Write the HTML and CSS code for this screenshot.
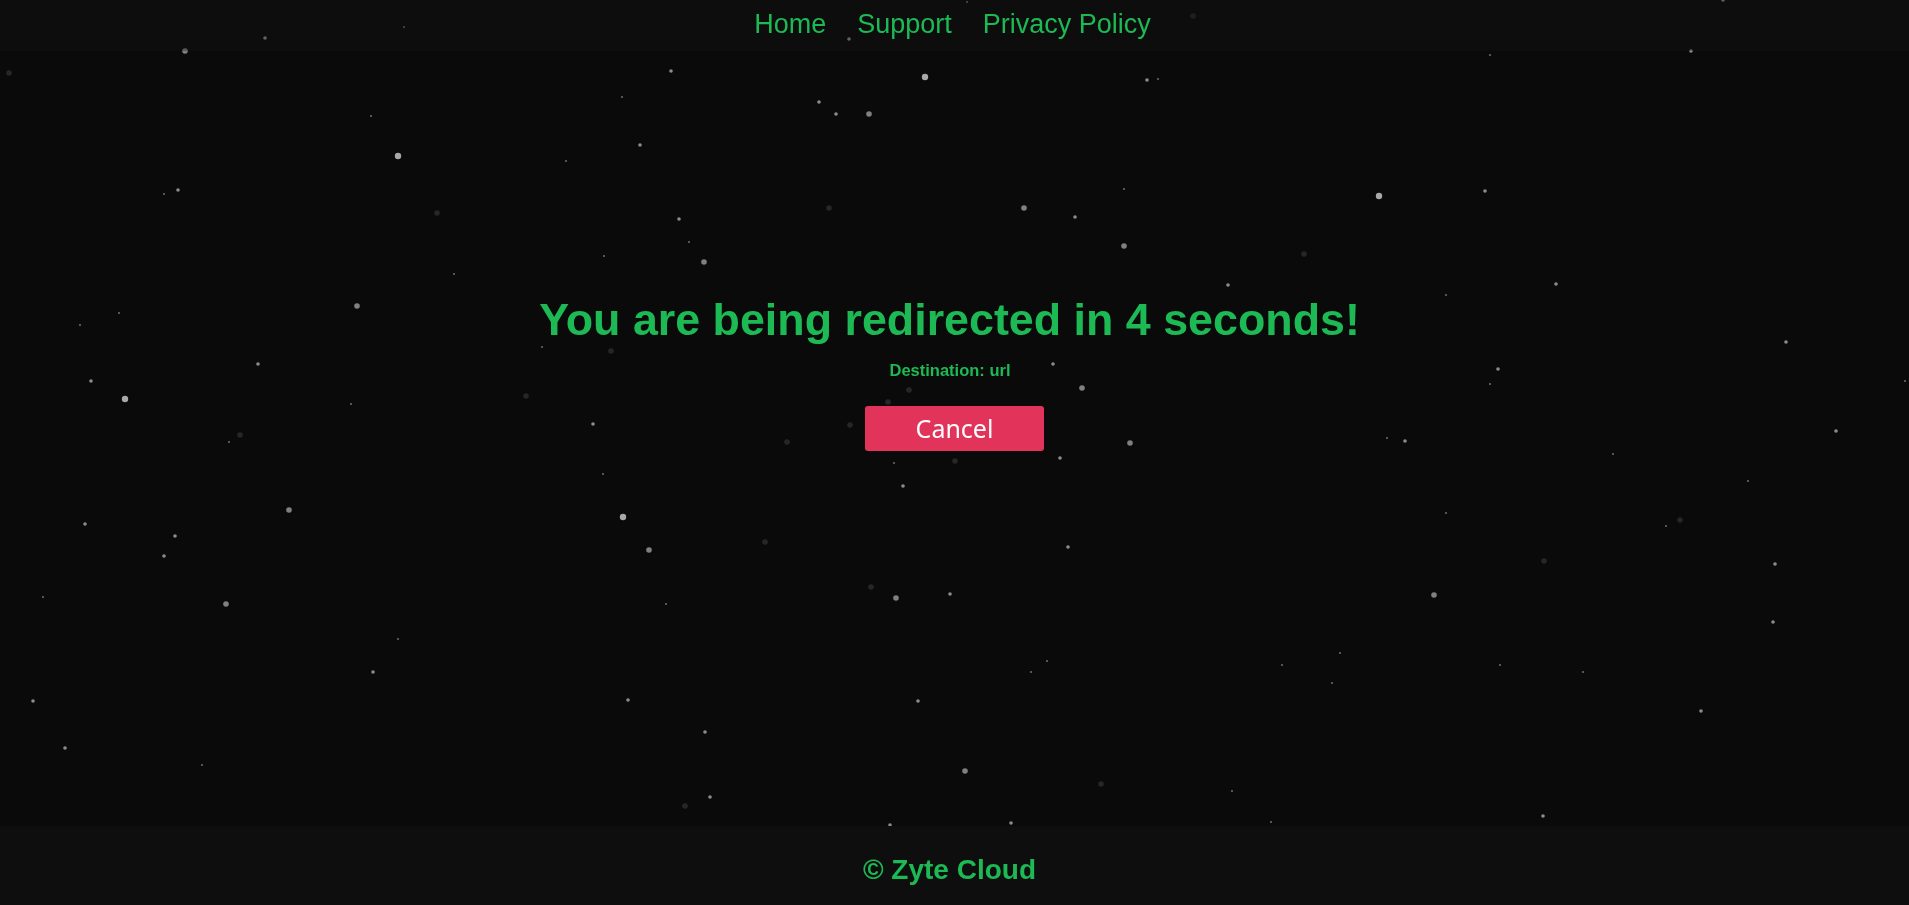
FILE: index.html
```html
<!DOCTYPE html>
<html lang="en">
<head>
<meta charset="utf-8">
<title>Redirecting</title>
<link rel="stylesheet" href="styles.css">
</head>
<body>
<svg class="stars" viewBox="0 0 1909 905" preserveAspectRatio="none" aria-hidden="true">
<circle class="m" cx="185" cy="51"/><circle class="s" cx="265" cy="38"/><circle class="d" cx="9" cy="73"/><circle class="t" cx="404" cy="27"/><circle class="t" cx="371" cy="116"/><circle class="b" cx="398" cy="156"/><circle class="s" cx="178" cy="190"/><circle class="t" cx="164" cy="194"/><circle class="d" cx="437" cy="213"/><circle class="s" cx="671" cy="71"/><circle class="t" cx="622" cy="97"/><circle class="s" cx="640" cy="145"/><circle class="t" cx="566" cy="161"/><circle class="s" cx="849" cy="39"/><circle class="s" cx="819" cy="102"/><circle class="s" cx="836" cy="114"/><circle class="m" cx="869" cy="114"/><circle class="b" cx="925" cy="77"/><circle class="t" cx="967" cy="2"/><circle class="s" cx="1147" cy="80"/><circle class="t" cx="1158" cy="79"/><circle class="d" cx="1193" cy="16"/><circle class="t" cx="1490" cy="55"/><circle class="s" cx="1691" cy="51"/><circle class="s" cx="1723" cy="0"/><circle class="b" cx="1379" cy="196"/><circle class="s" cx="1485" cy="191"/><circle class="t" cx="1124" cy="189"/><circle class="s" cx="1075" cy="217"/><circle class="m" cx="1024" cy="208"/><circle class="d" cx="829" cy="208"/><circle class="s" cx="679" cy="219"/><circle class="t" cx="689" cy="242"/><circle class="m" cx="704" cy="262"/><circle class="t" cx="604" cy="256"/><circle class="t" cx="454" cy="274"/><circle class="m" cx="1124" cy="246"/><circle class="d" cx="1304" cy="254"/><circle class="s" cx="1228" cy="285"/><circle class="t" cx="1446" cy="295"/><circle class="s" cx="1556" cy="284"/><circle class="m" cx="357" cy="306"/><circle class="t" cx="119" cy="313"/><circle class="t" cx="80" cy="325"/><circle class="s" cx="258" cy="364"/><circle class="s" cx="91" cy="381"/><circle class="b" cx="125" cy="399"/><circle class="t" cx="351" cy="404"/><circle class="d" cx="526" cy="396"/><circle class="d" cx="611" cy="351"/><circle class="t" cx="542" cy="347"/><circle class="s" cx="1053" cy="364"/><circle class="m" cx="1082" cy="388"/><circle class="d" cx="909" cy="390"/><circle class="d" cx="888" cy="402"/><circle class="s" cx="1498" cy="369"/><circle class="t" cx="1490" cy="384"/><circle class="s" cx="1786" cy="342"/><circle class="t" cx="1905" cy="381"/><circle class="d" cx="240" cy="435"/><circle class="t" cx="229" cy="442"/><circle class="s" cx="593" cy="424"/><circle class="d" cx="787" cy="442"/><circle class="d" cx="850" cy="425"/><circle class="d" cx="955" cy="424"/><circle class="m" cx="941" cy="438"/><circle class="m" cx="1130" cy="443"/><circle class="s" cx="1060" cy="458"/><circle class="t" cx="1387" cy="438"/><circle class="s" cx="1405" cy="441"/><circle class="s" cx="1836" cy="431"/><circle class="t" cx="1613" cy="454"/><circle class="m" cx="289" cy="510"/><circle class="s" cx="85" cy="524"/><circle class="s" cx="175" cy="536"/><circle class="s" cx="164" cy="556"/><circle class="t" cx="603" cy="474"/><circle class="b" cx="623" cy="517"/><circle class="m" cx="649" cy="550"/><circle class="d" cx="765" cy="542"/><circle class="s" cx="903" cy="486"/><circle class="t" cx="894" cy="463"/><circle class="d" cx="955" cy="461"/><circle class="s" cx="1068" cy="547"/><circle class="t" cx="1748" cy="481"/><circle class="d" cx="1680" cy="520"/><circle class="t" cx="1666" cy="526"/><circle class="t" cx="1446" cy="513"/><circle class="s" cx="1775" cy="564"/><circle class="d" cx="1544" cy="561"/><circle class="m" cx="1434" cy="595"/><circle class="t" cx="43" cy="597"/><circle class="m" cx="226" cy="604"/><circle class="t" cx="398" cy="639"/><circle class="s" cx="373" cy="672"/><circle class="t" cx="666" cy="604"/><circle class="d" cx="871" cy="587"/><circle class="m" cx="896" cy="598"/><circle class="s" cx="950" cy="594"/><circle class="t" cx="1047" cy="661"/><circle class="t" cx="1031" cy="672"/><circle class="t" cx="1340" cy="653"/><circle class="t" cx="1282" cy="665"/><circle class="t" cx="1332" cy="683"/><circle class="t" cx="1500" cy="665"/><circle class="t" cx="1583" cy="672"/><circle class="s" cx="1773" cy="622"/><circle class="s" cx="33" cy="701"/><circle class="s" cx="628" cy="700"/><circle class="s" cx="918" cy="701"/><circle class="s" cx="705" cy="732"/><circle class="s" cx="65" cy="748"/><circle class="t" cx="202" cy="765"/><circle class="m" cx="965" cy="771"/><circle class="s" cx="1701" cy="711"/><circle class="d" cx="1101" cy="784"/><circle class="d" cx="685" cy="806"/><circle class="s" cx="710" cy="797"/><circle class="t" cx="1232" cy="791"/><circle class="s" cx="890" cy="825"/><circle class="s" cx="1011" cy="823"/><circle class="t" cx="1271" cy="822"/><circle class="s" cx="1543" cy="816"/>
</svg>
<div class="page">
  <header class="topbar">
    <nav class="nav">
      <a class="nav-link" href="#">Home</a>
      <a class="nav-link" href="#">Support</a>
      <a class="nav-link" href="#">Privacy Policy</a>
    </nav>
  </header>
  <main class="main">
    <h1 class="title">You are being redirected in 4 seconds!</h1>
    <p class="dest">Destination: url</p>
    <button class="cancel" type="button">Cancel</button>
  </main>
  <footer class="footer">
    <p class="copy">© Zyte Cloud</p>
  </footer>
</div>
</body>
</html>
```

FILE: styles.css
```css
html, body {
  margin: 0;
  padding: 0;
  height: 100%;
}

body {
  background: #0a0a0a;
  font-family: "Liberation Sans", Arial, sans-serif;
  color: #1db954;
  overflow: hidden;
}

.stars {
  position: fixed;
  left: 0;
  top: 0;
  width: 100%;
  height: 100%;
  z-index: 0;
}

.stars .t { r: 1.1; fill: #6a6a6a; }
.stars .s { r: 1.8; fill: #8c8c8c; }
.stars .m { r: 2.8; fill: #808080; }
.stars .b { r: 3.2; fill: #a8a8a8; }
.stars .d { r: 2.8; fill: #262626; }

.page {
  position: relative;
  z-index: 1;
  display: flex;
  flex-direction: column;
  height: 100vh;
}

.topbar {
  height: 51px;
  box-sizing: border-box;
  padding-top: 9px;
  background: rgba(20, 20, 20, 0.35);
}

.nav {
  display: flex;
  justify-content: center;
  gap: 31px;
  padding-right: 4px;
}

.nav-link {
  font-size: 27px;
  line-height: 30px;
  color: #1db954;
  text-decoration: none;
}

.main {
  flex: 1;
  display: flex;
  flex-direction: column;
  align-items: center;
  padding-top: 242px;
}

.title {
  margin: 0;
  padding-right: 10px;
  font-size: 44.8px;
  line-height: 52px;
  font-weight: 700;
}

.dest {
  margin: 15px 0 0;
  padding-right: 9px;
  font-size: 16.5px;
  line-height: 20px;
  font-weight: 700;
}

.cancel {
  margin-top: 26px;
  width: 179px;
  height: 45px;
  border: none;
  border-radius: 3px;
  background: #e2335a;
  color: #ffffff;
  font-family: "Noto Sans", "Open Sans", sans-serif;
  font-size: 25px;
  line-height: 45px;
  padding: 0;
  cursor: pointer;
}

.footer {
  height: 79px;
  box-sizing: border-box;
  padding-top: 28px;
  padding-right: 10px;
  background: #0e0e0e;
  text-align: center;
}

.copy {
  margin: 0;
  font-size: 28px;
  line-height: 32px;
  font-weight: 700;
}
```
